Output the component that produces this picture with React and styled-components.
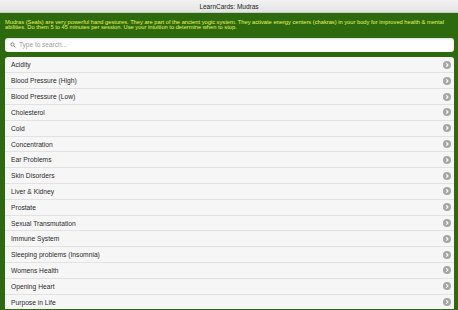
import React from "react"
import styled, { createGlobalStyle } from "styled-components"

const GlobalStyle = createGlobalStyle`
  html, body {
    margin: 0;
    padding: 0;
    background: #2d6a0e;
    font-family: "Liberation Sans", Arial, sans-serif;
    overflow: hidden;
  }
`

const topics = [
  "Acidity",
  "Blood Pressure (High)",
  "Blood Pressure (Low)",
  "Cholesterol",
  "Cold",
  "Concentration",
  "Ear Problems",
  "Skin Disorders",
  "Liver & Kidney",
  "Prostate",
  "Sexual Transmutation",
  "Immune System",
  "Sleeping problems (Insomnia)",
  "Womens Health",
  "Opening Heart",
  "Purpose in Life",
]

const Page = styled.div`
  width: 458px;
  height: 310px;
  overflow: hidden;
  background: #2d6a0e;
`

const Header = styled.div`
  height: 13px;
  background: linear-gradient(#f2f2f2, #e4e4e4);
  border-bottom: 1px solid #c9c9c9;
  box-sizing: border-box;
  display: flex;
  align-items: center;
  justify-content: center;
  font-size: 6.5px;
  color: #222;
`

const Content = styled.div`
  padding: 6.5px 4px 0 5px;
`

const Intro = styled.p`
  margin: 0;
  color: #e6f25c;
  font-size: 5.72px;
  line-height: 5.6px;
`

const Search = styled.div`
  margin-top: 7px;
  height: 14px;
  background: #fff;
  border-radius: 3px;
  box-shadow: inset 0 1px 2px rgba(0, 0, 0, 0.15);
  display: flex;
  align-items: center;
  gap: 3px;
  padding-left: 5px;
  font-size: 6.5px;
  color: #9a9a9a;
`

const List = styled.ul`
  list-style: none;
  margin: 5px 0 0;
  padding: 0;
  background: #f6f6f6;
  border-radius: 3px 3px 0 0;
  overflow: hidden;
`

const Row = styled.li`
  height: 15.8px;
  box-sizing: border-box;
  border-top: ${p => (p.$first ? "none" : "1px solid #e2e2e2")};
  display: flex;
  align-items: center;
  justify-content: space-between;
  padding: 0 3px 0 6px;
  font-size: 6.7px;
  color: #2a2a2a;
`

const Arrow = styled.span`
  width: 8px;
  height: 8px;
  border-radius: 50%;
  background: #a6a6a6;
  display: flex;
  align-items: center;
  justify-content: center;
`

const Chevron = () => (
  <svg width="6" height="6" viewBox="0 0 6 6">
    <path d="M2.3 1.4 L3.9 3 L2.3 4.6" stroke="#fff" strokeWidth="1.2" fill="none" />
  </svg>
)

const SearchIcon = () => (
  <svg width="6" height="6" viewBox="0 0 6 6">
    <circle cx="2.4" cy="2.4" r="1.6" stroke="#777" strokeWidth="0.9" fill="none" />
    <path d="M3.6 3.6 L5.3 5.3" stroke="#777" strokeWidth="1" />
  </svg>
)

export default function App() {
  return (
    <Page>
      <GlobalStyle />
      <Header>LearnCards: Mudras</Header>
      <Content>
        <Intro>
          Mudras (Seals) are very powerful hand gestures. They are part of the ancient yogic
          system. They activate energy centers (chakras) in your body for improved health &amp;
          mental abilities. Do them 5 to 45 minutes per session. Use your intuition to determine
          when to stop.
        </Intro>
        <Search>
          <SearchIcon />
          Type to search...
        </Search>
        <List>
          {topics.map((t, i) => (
            <Row key={t} $first={i === 0}>
              {t}
              <Arrow>
                <Chevron />
              </Arrow>
            </Row>
          ))}
        </List>
      </Content>
    </Page>
  )
}
